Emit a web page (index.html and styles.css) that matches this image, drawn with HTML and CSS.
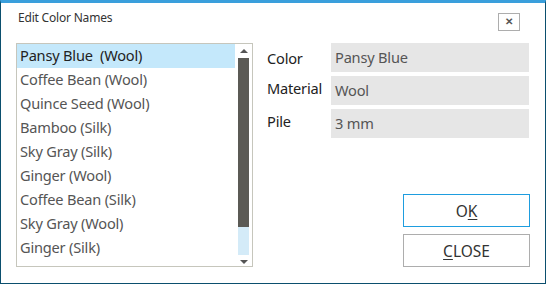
FILE: index.html
```html
<!DOCTYPE html>
<html lang="en">
<head>
    <meta charset="UTF-8">
    <title>Edit Color Names</title>
    <link rel="stylesheet" href="styles.css">
</head>
<body>
    <div class="dialog">
        <div class="titlebar">
            <span class="title">Edit Color Names</span>
            <button class="close-x">&#x2715;</button>
        </div>
        <div class="content">
            <div class="listbox">
                <ul class="items">
                    <li class="selected">Pansy Blue&nbsp; (Wool)</li>
                    <li>Coffee Bean (Wool)</li>
                    <li>Quince Seed (Wool)</li>
                    <li>Bamboo (Silk)</li>
                    <li>Sky Gray (Silk)</li>
                    <li>Ginger (Wool)</li>
                    <li>Coffee Bean (Silk)</li>
                    <li>Sky Gray (Wool)</li>
                    <li>Ginger (Silk)</li>
                    <li>Bamboo (Wool)</li>
                </ul>
                <div class="scrollbar">
                    <div class="arrow up"></div>
                    <div class="thumb"></div>
                    <div class="track"></div>
                    <div class="arrow down"></div>
                </div>
            </div>
            <div class="side">
                <div class="fields">
                    <div class="field">
                        <span class="label">Color</span>
                        <span class="value">Pansy Blue</span>
                    </div>
                    <div class="field">
                        <span class="label label-up">Material</span>
                        <span class="value">Wool</span>
                    </div>
                    <div class="field">
                        <span class="label label-up">Pile</span>
                        <span class="value">3 mm</span>
                    </div>
                </div>
                <div class="buttons">
                    <button class="btn btn-ok">O<u>K</u></button>
                    <button class="btn"><u>C</u>LOSE</button>
                </div>
            </div>
        </div>
    </div>
</body>
</html>
```

FILE: styles.css
```css
html, body {
    margin: 0;
    padding: 0;
    background: #fff;
}
body {
    font-family: "Noto Sans", "Open Sans", sans-serif;
    color: #333;
}
.dialog {
    box-sizing: border-box;
    width: 546px;
    height: 284px;
    border: 1px solid #0b4f6e;
    border-top: 3px solid #3a9fdc;
    overflow: hidden;
    display: flex;
    flex-direction: column;
}
.titlebar {
    height: 40px;
    display: flex;
    align-items: flex-start;
    justify-content: space-between;
}
.title {
    font-size: 12px;
    color: #333;
    margin: 6px 0 0 17px;
    letter-spacing: -0.2px;
}
.close-x {
    box-sizing: border-box;
    width: 22px;
    height: 18px;
    margin: 10px 25px 0 0;
    padding: 0;
    border: 1px solid #adadad;
    background: #fff;
    color: #555;
    font-size: 10px;
    font-weight: bold;
    line-height: 16px;
}
.content {
    display: flex;
    padding-left: 15px;
}
.listbox {
    box-sizing: border-box;
    width: 237px;
    height: 224px;
    border: 1px solid #c6c6bc;
    display: flex;
    overflow: hidden;
}
.items {
    list-style: none;
    margin: 0;
    padding: 0;
    width: 218px;
}
.items li {
    height: 24px;
    line-height: 23px;
    padding-left: 3px;
    font-size: 14.6px;
    color: #555;
    white-space: nowrap;
    letter-spacing: -0.2px;
}
.items li.selected {
    background: #c4e8fb;
    color: #222;
}
.scrollbar {
    width: 11px;
    margin-left: 3px;
    display: flex;
    flex-direction: column;
    align-items: center;
}
.arrow {
    width: 0;
    height: 0;
    border-left: 4px solid transparent;
    border-right: 4px solid transparent;
}
.arrow.up {
    margin: 5px 0 5px;
    border-bottom: 4px solid #555;
}
.arrow.down {
    margin: 5px 0 0;
    border-top: 4px solid #555;
}
.thumb {
    width: 11px;
    height: 169px;
    background: #5b5a55;
}
.track {
    width: 11px;
    height: 28px;
    background: #d4ebf8;
}
.side {
    margin-left: 14px;
    width: 262px;
    height: 224px;
    display: flex;
    flex-direction: column;
    justify-content: space-between;
}
.fields {
    display: flex;
    flex-direction: column;
    gap: 4px;
}
.field {
    display: flex;
    align-items: center;
    height: 29px;
}
.label {
    width: 64px;
    font-size: 14.6px;
    color: #222;
    letter-spacing: -0.2px;
}
.label-up {
    margin-top: -6px;
}
.value {
    box-sizing: border-box;
    width: 198px;
    height: 29px;
    line-height: 29px;
    padding-left: 4px;
    background: #e6e6e6;
    font-size: 14.6px;
    color: #555;
    letter-spacing: -0.2px;
}
.buttons {
    display: flex;
    flex-direction: column;
    gap: 7px;
    padding-left: 136px;
}
.btn {
    box-sizing: border-box;
    width: 127px;
    height: 33px;
    border: 1px solid #adadad;
    background: #fff;
    font-family: "Noto Sans", "Open Sans", sans-serif;
    font-size: 15.5px;
    color: #333;
    padding: 0;
}
.btn-ok {
    border-color: #1e9ddf;
}
.btn u {
    text-underline-offset: 2px;
}
```
